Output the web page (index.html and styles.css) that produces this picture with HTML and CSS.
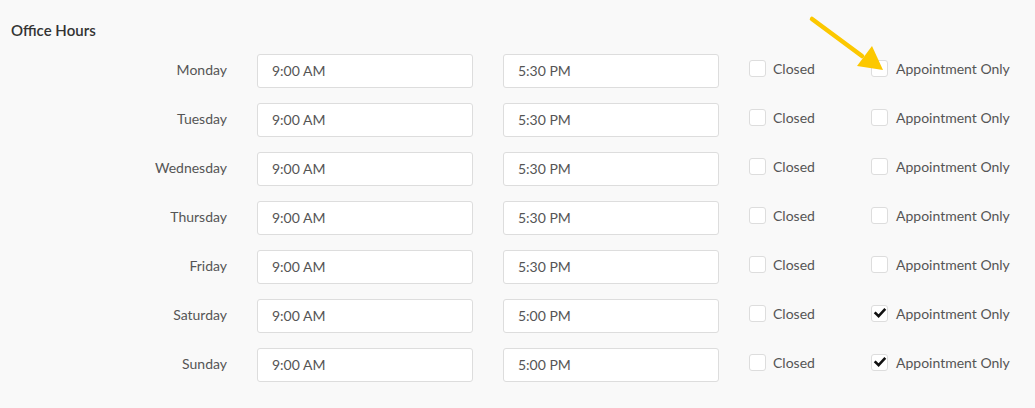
FILE: index.html
```html
<!DOCTYPE html>
<html>
<head>
<meta charset="utf-8">
<link rel="stylesheet" href="styles.css">
</head>
<body>
<div class="page">
  <h2 class="title">Office Hours</h2>
  <div class="rows">
    <div class="row"><span class="day">Monday</span><div class="field">9:00 AM</div><div class="field">5:30 PM</div><label class="check closed"><span class="box"></span>Closed</label><label class="check"><span class="box"></span>Appointment Only</label></div>
    <div class="row"><span class="day">Tuesday</span><div class="field">9:00 AM</div><div class="field">5:30 PM</div><label class="check closed"><span class="box"></span>Closed</label><label class="check"><span class="box"></span>Appointment Only</label></div>
    <div class="row"><span class="day">Wednesday</span><div class="field">9:00 AM</div><div class="field">5:30 PM</div><label class="check closed"><span class="box"></span>Closed</label><label class="check"><span class="box"></span>Appointment Only</label></div>
    <div class="row"><span class="day">Thursday</span><div class="field">9:00 AM</div><div class="field">5:30 PM</div><label class="check closed"><span class="box"></span>Closed</label><label class="check"><span class="box"></span>Appointment Only</label></div>
    <div class="row"><span class="day">Friday</span><div class="field">9:00 AM</div><div class="field">5:30 PM</div><label class="check closed"><span class="box"></span>Closed</label><label class="check"><span class="box"></span>Appointment Only</label></div>
    <div class="row"><span class="day">Saturday</span><div class="field">9:00 AM</div><div class="field">5:00 PM</div><label class="check closed"><span class="box"></span>Closed</label><label class="check"><span class="box"><svg viewBox="0 0 16 16" width="16" height="16"><path d="M3.6 8.3 L6.6 11.1 L12.4 4.9" fill="none" stroke="#111" stroke-width="2.6" stroke-linecap="square"/></svg></span>Appointment Only</label></div>
    <div class="row"><span class="day">Sunday</span><div class="field">9:00 AM</div><div class="field">5:00 PM</div><label class="check closed"><span class="box"></span>Closed</label><label class="check"><span class="box"><svg viewBox="0 0 16 16" width="16" height="16"><path d="M3.6 8.3 L6.6 11.1 L12.4 4.9" fill="none" stroke="#111" stroke-width="2.6" stroke-linecap="square"/></svg></span>Appointment Only</label></div>
  </div>
  <svg class="arrow" width="100" height="80" viewBox="0 0 100 80">
    <line x1="12" y1="14" x2="62" y2="51" stroke="#fcc800" stroke-width="4.5" stroke-linecap="round"/>
    <polygon points="83,65 57,61 72,41" fill="#fcc800"/>
  </svg>
</div>
</body>
</html>
```
FILE: styles.css
```css
html, body {
  margin: 0;
  padding: 0;
  background: #f9f9f9;
}
.page {
  position: relative;
  width: 1035px;
  height: 408px;
  box-sizing: border-box;
  padding: 20px 0 0 11px;
  font-family: Lato, "Noto Sans", sans-serif;
  font-size: 14px;
  color: #555;
  border-left: 2px solid #f0f0f0;
  margin-left: -2px;
}
.title {
  margin: 0;
  font-size: 15px;
  line-height: 20px;
  font-weight: 600;
  color: #333;
}
.rows {
  margin-top: 14px;
  display: flex;
  flex-direction: column;
  gap: 15px;
}
.row {
  display: flex;
  align-items: center;
  gap: 30px;
  height: 34px;
}
.day {
  flex: none;
  width: 216px;
  text-align: right;
  color: #555;
  margin-top: -4px;
}
.field {
  flex: none;
  width: 216px;
  height: 34px;
  box-sizing: border-box;
  border: 1px solid #ddd;
  border-radius: 3px;
  background: #fff;
  padding-left: 14px;
  line-height: 32px;
  color: #555;
}
.check {
  display: flex;
  align-items: center;
  gap: 8px;
  margin-top: -6px;
  color: #555;
  white-space: nowrap;
}
.check.closed {
  flex: none;
  width: 122px;
  margin-right: -30px;
  gap: 7px;
}
.box {
  flex: none;
  width: 17px;
  height: 17px;
  box-sizing: border-box;
  border: 1px solid #ddd;
  border-radius: 3px;
  background: #fff;
  position: relative;
}
.box svg {
  position: absolute;
  left: -0.5px;
  top: -0.5px;
}
.arrow {
  position: absolute;
  left: 800px;
  top: 5px;
}
```
